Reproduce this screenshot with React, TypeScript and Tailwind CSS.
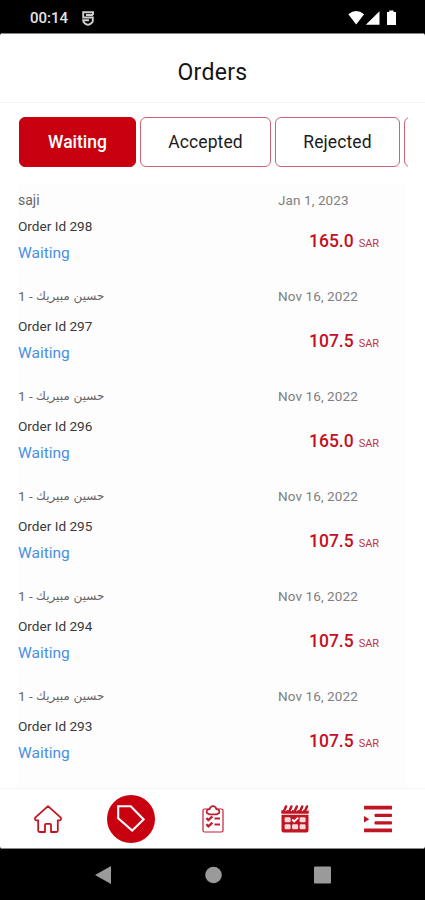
import { clsx } from "clsx";

const tabs = [
  { label: "Waiting", width: "w-[117px]" },
  { label: "Accepted", width: "w-[131px]" },
  { label: "Rejected", width: "w-[125px]" },
  { label: "", width: "w-[128px]" },
];

const orders = [
  { id: 298, customer: "saji", date: "Jan 1, 2023", price: "165.0" },
  { id: 297, customer: "حسين مبيريك", suffix: "1 - ", date: "Nov 16, 2022", price: "107.5" },
  { id: 296, customer: "حسين مبيريك", suffix: "1 - ", date: "Nov 16, 2022", price: "165.0" },
  { id: 295, customer: "حسين مبيريك", suffix: "1 - ", date: "Nov 16, 2022", price: "107.5" },
  { id: 294, customer: "حسين مبيريك", suffix: "1 - ", date: "Nov 16, 2022", price: "107.5" },
  { id: 293, customer: "حسين مبيريك", suffix: "1 - ", date: "Nov 16, 2022", price: "107.5" },
];

const StatusBar = () => (
  <div className="h-[33px] shrink-0 bg-black flex items-center justify-between pl-[30px] pr-[29px] pt-[2px]">
    <div className="flex items-center gap-[14px] pt-px">
      <span className="text-[15px] font-medium text-[#e4e4e4] leading-none">00:14</span>
      <svg width="12" height="15" viewBox="0 0 12 15" fill="none" stroke="#d0d0d0" strokeWidth="1.9">
        <path d="M11 4V1.2H1.2v5.3H10.8v3.3Q10.5 12.5 6 13.8 1.5 12.5 1.2 9.3H7M4 4h7" />
      </svg>
    </div>
    <svg width="48" height="16" viewBox="0 0 48 16" fill="#fff">
      <path d="M0.3 4.2Q8.2-2.2 16.1 4.2L8.2 14.5z" />
      <path d="M31.5 1.2v13.6H17.8z" />
      <path d="M41.2 0.5h4.4V2H48v13h-9V2h2.2z" />
    </svg>
  </div>
);

const OrderTabs = () => (
  <div className="h-[81px] shrink-0 pl-[19px] pr-[17px] pt-[14px]">
    <div className="flex gap-1 overflow-hidden">
      {tabs.map((tab, index) => (
        <button
          key={index}
          className={clsx(
            "h-[50px] shrink-0 rounded-md border text-[17.5px]",
            tab.width,
            index === 0
              ? "bg-[#c8000f] border-[#c8000f] text-white font-medium"
              : "bg-white border-[#ca6472] text-[#1b1b1b] tracking-[0.1px]"
          )}
        >
          {tab.label}
        </button>
      ))}
    </div>
  </div>
);

const OrderRow = ({ order }: { order: (typeof orders)[number] }) => (
  <div className="flex mb-[14px]">
    {/* Customer and status */}
    <div className="w-[260px]">
      <div
        className={clsx(
          "flex items-center whitespace-pre text-[14px] text-[#666]",
          order.suffix ? "h-[34px]" : "h-[26px]"
        )}
      >
        {order.suffix && <span className="text-[13.5px]">{order.suffix}</span>}
        <span dir="auto" className={order.suffix ? "text-[12px] font-['DejaVu_Sans',sans-serif]" : ""}>
          {order.customer}
        </span>
      </div>
      <div className="h-[26px] leading-[26px] text-[13.6px] text-[#3a3a3a]">Order Id {order.id}</div>
      <div className="h-[26px] leading-[28px] text-[15.5px] text-[#4a90e2]">Waiting</div>
    </div>

    {/* Date and price */}
    <div>
      <div
        className={clsx(
          "flex items-center text-[13.5px] text-[#808080] tracking-[0.1px]",
          order.suffix ? "h-[34px]" : "h-[26px]"
        )}
      >
        {order.date}
      </div>
      <div className="pl-[31px] leading-[56px] h-[52px] text-[#c4101f] whitespace-nowrap">
        <span className="text-[17.5px] font-medium">{order.price}</span>
        <span className="text-[11px] ml-[5px] text-[#c43445]">SAR</span>
      </div>
    </div>
  </div>
);

const HomeIcon = () => (
  <svg width="28" height="28" viewBox="0 0 28 28" fill="none" stroke="#c01522" strokeWidth="1.8" strokeLinejoin="round">
    <path d="M14 1.2 1.2 12.6Q.5 15 2.3 15.3H4.2V25.5q0 1.5 1.5 1.5H11v-7.2q0-1 1-1h4q1 0 1 1V27h5.3q1.5 0 1.5-1.5V15.3h1.9q1.8-.3 1.1-2.7z" />
  </svg>
);

const TagIcon = () => (
  <svg width="28" height="27" viewBox="0 0 28 27" fill="none" stroke="#fff" strokeWidth="2.1">
    <path d="M1.2 1.2h12.6L26.6 14.4 15.2 25.6 1.2 13.2z" />
  </svg>
);

const ClipboardIcon = () => (
  <svg width="22" height="28" viewBox="0 0 22 28" fill="none" stroke="#c01f36">
    <rect x="1" y="4" width="20" height="23" rx="1.5" strokeWidth="1.2" />
    <path d="M4.8 8Q4 4.5 7.5 4.2 8.5 1.2 11 1.2t3.5 3Q18 4.5 17.2 8L14.8 9.3H7.2z" fill="#fff" strokeWidth="1.8" />
    <path d="m4.4 13 2 2.2 4-3.8M4.4 19.2l2 2.2 4-3.8" strokeWidth="2.3" />
    <path d="M12.5 13.5h5.5M12.5 19.6h5.5" strokeWidth="2" />
  </svg>
);

const CalendarIcon = () => (
  <svg width="28" height="28" viewBox="0 0 28 28" fill="#c01522">
    <path d="M.5 5h27v3.4H.5zM.5 9.8h27v15.7q0 2-2 2h-23q-2 0-2-2z" />
    <path d="M3.2 6 5 2.2M8.6 6l1.8-3.8M14 6l1.8-3.8M19.4 6l1.8-3.8M24.2 6 26 2.2" stroke="#fff" strokeWidth="4" />
    <path d="M2.8 6.5 5 1.5M8.2 6.5l2.2-5M13.6 6.5l2.2-5M19 6.5l2.2-5M23.8 6.5l2.2-5" stroke="#c01522" strokeWidth="2.5" strokeLinecap="round" />
    <path d="M.5 6.2h27v2.2H.5z" />
    <g fill="#f5dadd">
      <rect x="3.6" y="12.2" width="6" height="5" rx="1.2" />
      <rect x="18.6" y="12.2" width="6" height="5" rx="1.2" />
      <rect x="3.6" y="19.2" width="6" height="5" rx="1.2" />
      <rect x="11.1" y="19.2" width="6" height="5" rx="1.2" />
      <rect x="18.6" y="19.2" width="6" height="5" rx="1.2" />
    </g>
    <path d="m11.2 14.5 2 2 4-3.8" fill="none" stroke="#fff" strokeWidth="1.8" />
  </svg>
);

const MenuIcon = () => (
  <svg width="28" height="28" viewBox="0 0 28 28" fill="#c01522">
    <rect y=".8" width="28" height="3.6" rx=".5" />
    <rect x="10.5" y="8.8" width="17.5" height="3.3" rx="1" />
    <rect x="10.5" y="16.2" width="17.5" height="3.3" rx="1" />
    <rect y="23.6" width="28" height="3.6" rx=".5" />
    <path d="m0 11 5.3 3.2L0 17.4z" />
  </svg>
);

const App = () => {
  return (
    <div className="w-[425px] h-[900px] bg-black flex flex-col overflow-hidden font-['Roboto',sans-serif]">
      <StatusBar />

      <main className="h-[816px] shrink-0 bg-white rounded-[3px] overflow-hidden flex flex-col">
        <header className="h-[70px] shrink-0 border-t border-[#858585] border-b border-b-[#f5f5f5] flex items-center justify-center pt-[10px]">
          <h1 className="text-[23px] tracking-[0.3px] text-[#151515]">Orders</h1>
        </header>

        <OrderTabs />

        {/* Orders */}
        <div className="h-[604px] shrink-0 bg-white pl-[18px] pr-[19px]">
          <div className="h-full bg-[#fdfdfd] pt-[3px] overflow-hidden">
            {orders.map((order) => (
              <OrderRow key={order.id} order={order} />
            ))}
          </div>
        </div>

        {/* Bottom navigation */}
        <nav className="flex-1 border-t border-[#f7f7f7] border-b border-b-[#8a8a8a] flex items-center pl-[7px] pr-[6px]">
          <div className="flex-1 flex justify-center"><HomeIcon /></div>
          <div className="flex-1 flex justify-center">
            <div className="size-12 rounded-full bg-[#c8000f] flex items-center justify-center">
              <TagIcon />
            </div>
          </div>
          <div className="flex-1 flex justify-center"><ClipboardIcon /></div>
          <div className="flex-1 flex justify-center"><CalendarIcon /></div>
          <div className="flex-1 flex justify-center"><MenuIcon /></div>
        </nav>
      </main>

      {/* System buttons */}
      <div className="flex-1 flex items-center justify-center">
        <svg width="236" height="18" viewBox="0 0 236 18" fill="#9a9a9a">
          <path d="M16 0v18L0 9z" />
          <circle cx="118.5" cy="9" r="8.3" />
          <rect x="219" y=".5" width="17" height="17" rx="1" />
        </svg>
      </div>
    </div>
  );
};

export default App;
